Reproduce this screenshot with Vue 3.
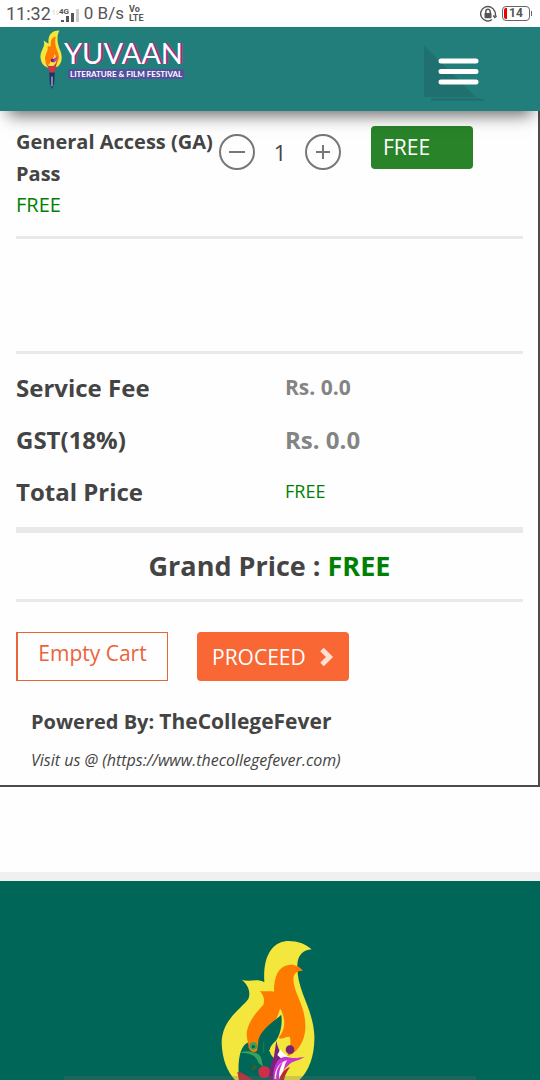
<script setup>
import { ref } from 'vue'

const quantity = ref(1)
const charges = [
  { label: 'Service Fee', value: 'Rs. 0.0', kind: 'small' },
  { label: 'GST(18%)', value: 'Rs. 0.0', kind: 'large' },
  { label: 'Total Price', value: 'FREE', kind: 'free' },
]
</script>

<template>
  <div class="screen">
    <div class="status">
      <span class="clock">11:32</span>
      <svg class="signal" viewBox="0 0 28 18" aria-hidden="true">
        <path d="M2 5v5M0 7l2-2M5 5v5M5 10l2-2" stroke="#ddd" fill="none" />
        <g fill="#555">
          <rect x="9" y="15" width="3" height="2" />
          <rect x="14" y="11" width="3" height="6" />
          <rect x="19" y="8" width="3" height="9" />
        </g>
        <rect x="24" y="4" width="3" height="13" fill="#ccc" />
        <text x="7" y="9" class="gen">4G</text>
      </svg>
      <span class="rate">0 B/s</span>
      <span class="volte"><span>Vo</span><span>LTE</span></span>
      <svg class="lock" viewBox="0 0 18 18" aria-hidden="true">
        <path d="M15.7 6.5A7.2 7.2 0 1 0 13 14.600M15.4 5.500a7.2 7.2 0 0 1 .8 5.500M14.300 10.500l1.500 2 1.900-1.700" fill="none" stroke="#555" stroke-width="1.4" />
        <rect x="5.5" y="8" width="7" height="5.2" rx="0.6" fill="#555" />
        <path d="M6.8 8V6.5a2.2 2.2 0 0 1 4.4 0V8" fill="none" stroke="#555" stroke-width="1.5" />
      </svg>
      <span class="battery">14</span>
    </div>

    <header class="header">
      <a class="brand" href="#" aria-label="Yuvaan Literature and Film Festival">
        <svg class="torch" viewBox="0 0 75 195" aria-hidden="true">
          <path d="M63 5C36 5 26 20 28 47L12 37C20 56 3 66 2 88C3 107 11 119 25 123L57 121C72 108 73 89 66 70C57 50 52 23 63 5Z" fill="#f3e63c" />
          <path d="M51 24C32 29 36 45 35 56L25 55C29 72 15 80 17 98C19 110 28 115 31 113C33 98 46 96 47 79C56 90 48 101 53 109C67 94 60 78 53 62C49 51 48 35 51 24Z" fill="#ff7a00" />
          <circle cx="41" cy="100" r="6" fill="#782377" />
          <path d="M45 94l14-7-7 15-8 7z" fill="#c238c9" />
          <path d="M16 104l13 14 15 0 12-15-6 24-5 14H32l-3-15z" fill="#d73243" />
          <path d="M30 139h18l-2 36-7 17-7-17z" fill="#203263" />
          <path d="M39 152v31" stroke="#e9e6f3" stroke-width="3" />
        </svg>
        <span class="wordmark">
          <span class="name">YUVAAN</span>
          <span class="tagline">LITERATURE &amp; FILM FESTIVAL</span>
        </span>
      </a>
      <button class="menu" type="button" aria-label="Open menu">
        <svg viewBox="0 0 64 60" aria-hidden="true">
          <path d="M0 3 52 54H0z" fill="#20706f" />
          <path d="M7 55h49l6 3H7z" fill="#20706f" />
          <path d="M17 18h35M17 28.500h35M17 39h35" stroke="#fff" stroke-width="5" stroke-linecap="round" />
        </svg>
      </button>
    </header>

    <main class="cart">
      <section class="item">
        <div class="pass">
          <h2>General Access (GA) Pass</h2>
          <p>FREE</p>
        </div>
        <div class="stepper">
          <button type="button" aria-label="Remove one pass" @click="quantity = Math.max(0, quantity - 1)">
            <svg viewBox="0 0 36 36"><circle cx="18" cy="18" r="17" /><path d="M10 18h16" /></svg>
          </button>
          <output>{{ quantity }}</output>
          <button type="button" aria-label="Add one pass" @click="quantity++">
            <svg viewBox="0 0 36 36"><circle cx="18" cy="18" r="17" /><path d="M11 18h14M18 11v14" /></svg>
          </button>
        </div>
        <button class="price" type="button">FREE</button>
      </section>

      <div class="notes"></div>

      <dl class="charges">
        <div v-for="row in charges" :key="row.label">
          <dt>{{ row.label }}</dt>
          <dd :class="row.kind">{{ row.value }}</dd>
        </div>
      </dl>

      <p class="grand">Grand Price : <strong>FREE</strong></p>

      <div class="actions">
        <button class="empty" type="button">Empty Cart</button>
        <button class="proceed" type="button">
          PROCEED
          <svg viewBox="0 0 14 20" aria-hidden="true"><path d="M2 2.500 9.500 10 2 17.500" /></svg>
        </button>
      </div>

      <div class="credit">
        <h3>Powered By: <span>TheCollegeFever</span></h3>
        <a href="https://www.thecollegefever.com">Visit us @ (https://www.thecollegefever.com)</a>
      </div>
    </main>

    <footer class="footer">
      <svg class="flame" viewBox="0 0 420 450" aria-hidden="true">
        <path d="M335 58C315 40 290 32 260 33C215 38 188 80 193 157C175 145 150 156 126 150C145 165 153 188 145 207C120 240 65 270 65 340C67 390 82 425 105 450H298C330 420 345 370 343 315C338 230 290 185 292 105C293 75 310 60 335 58Z" fill="#f3e63c" />
        <path d="M308 123C300 108 280 102 265 105C235 110 222 140 222 185C210 182 195 185 180 183C190 195 195 207 190 225C170 245 140 280 140 315C142 335 146 350 160 362C175 320 225 300 240 235C260 270 255 300 236 323C250 332 260 316 270 322C274 340 268 360 262 378C292 370 318 330 316 285C314 220 280 190 280 145C282 130 290 122 308 123Z" fill="#ff7a00" />
        <path d="M244 254C212 282 177 303 174 338L142 338C120 350 112 390 117 450H225L219 382C205 365 205 352 227 333C240 316 248 286 244 254Z" fill="#006758" />
        <path d="M206 362C218 356 221 346 228 340L237 360 222 371Z" fill="#f3e63c" />
        <path d="M190 335C193 345 189 356 191 368" fill="none" stroke="#24734b" stroke-width="4" />
        <path d="M144 334C160 338 168 330 175 338L171 362C165 369 152 366 146 354Z" fill="#ff7a00" />
        <circle cx="160" cy="348" r="11" fill="#35a35a" />
        <circle cx="160" cy="350" r="5" fill="#006758" />
        <path d="M124 366C148 360 163 366 177 374C187 383 184 394 190 410L176 400C167 373 148 370 124 369Z" fill="#35a35a" />
        <path d="M160 402l12 10-18 12z" fill="#35632e" />
        <circle cx="193" cy="426" r="18" fill="#d12d48" />
        <path d="M112 426C130 427 142 439 158 450H117Z" fill="#bd303c" />
        <path d="M229 332C234 355 240 370 256 380C232 390 218 415 221 450L208 450C207 413 216 391 222 379Z" fill="#782377" />
        <path d="M241 358C249 370 257 376 268 380L243 385 232 375Z" fill="#fff" />
        <circle cx="270" cy="359" r="13" fill="#782377" />
        <path d="M220 450C218 405 233 379 260 380C281 388 300 382 314 380C294 394 276 392 266 405C252 416 243 431 238 450Z" fill="#c933d1" />
        <path d="M223 446C226 413 239 396 262 391C251 405 258 411 239 447Z" fill="#fff" />
        <path d="M229 448C227 424 236 405 249 396C239 414 236 430 237 448Z" fill="#c933d1" />
        <path d="M270 411C253 417 243 431 237 450H252C255 433 263 422 270 411Z" fill="#b32c30" />
      </svg>
      <div class="panel"></div>
    </footer>
  </div>
</template>

<style>
body {
  margin: 0;
}
</style>

<style scoped>
.screen {
  display: flex;
  flex-direction: column;
  height: 100vh;
  overflow: hidden;
  background: #fefefe;
  color: #444;
  font-family: "Open Sans", "Noto Sans", sans-serif;
}
h2, h3, p, dl, dd {
  margin: 0;
}
button {
  margin: 0;
  padding: 0;
  border: 0;
  background: none;
  color: inherit;
  font: inherit;
  cursor: pointer;
}
svg {
  display: block;
}

.status {
  display: flex;
  flex: none;
  align-items: center;
  height: 27px;
  padding: 0 10px 0 6px;
  background: #fff;
  color: #555;
  font: 18px/27px Roboto, sans-serif;
}
.signal {
  width: 28px;
  height: 18px;
  margin: 0 4px 0 1px;
}
.gen {
  fill: #555;
  font: bold 8px Roboto, sans-serif;
}
.rate {
  font-size: 17px;
}
.volte {
  display: flex;
  flex-direction: column;
  margin: 0 auto 0 5px;
  font-size: 9px;
  font-weight: 700;
  line-height: 9px;
}
.lock {
  width: 18px;
  height: 18px;
  margin-right: 5px;
}
.battery {
  position: relative;
  box-sizing: border-box;
  width: 28px;
  height: 15px;
  border: 1px solid #666;
  border-radius: 4px;
  background: linear-gradient(90deg, #e00 4px, transparent 4px);
  background-clip: content-box;
  padding: 1px;
  font-size: 12px;
  font-weight: 700;
  line-height: 11px;
  text-align: center;
}
.battery::after {
  content: "";
  position: absolute;
  top: 4px;
  right: -3px;
  width: 1px;
  height: 5px;
  background: #666;
}

.header {
  position: relative;
  z-index: 1;
  display: flex;
  flex: none;
  justify-content: space-between;
  align-items: flex-start;
  box-sizing: border-box;
  height: 84px;
  padding: 2px 52px 0 39px;
  background: #217e7b;
  box-shadow: 0 12px 16px -8px rgba(0, 0, 0, 0.6);
}
.brand {
  display: flex;
  text-decoration: none;
}
.torch {
  width: 25px;
  height: 61px;
}
.wordmark {
  display: flex;
  flex-direction: column;
  align-items: flex-start;
  padding-top: 8px;
}
.name {
  color: #fff;
  font: 29px/32px Lato, sans-serif;
  text-shadow: 1px 0 #a02a82, 2px 0 #a02a82;
}
.tagline {
  margin-left: 4px;
  padding: 0 2px;
  background: #5350a0;
  color: #fff;
  font: 700 8px/10px Lato, sans-serif;
  white-space: nowrap;
}
.menu {
  margin-top: 14px;
}
.menu svg {
  width: 64px;
  height: 60px;
}

.cart {
  flex: none;
  padding: 15px 15px 13px 16px;
  border-right: 2px solid #4c4c4c;
  border-bottom: 2px solid #4c4c4c;
}
.item {
  display: grid;
  grid-template-columns: 203px 122px 1fr;
  align-items: start;
  height: 110px;
  border-bottom: 3px solid #e9e9e9;
}
.pass h2 {
  font-size: 20px;
  font-weight: 700;
  line-height: 32px;
}
.pass p {
  color: #008000;
  font-size: 20px;
  line-height: 30px;
}
.stepper {
  display: flex;
  justify-content: space-between;
  align-items: center;
  margin-top: 8px;
}
.stepper svg {
  width: 36px;
  height: 36px;
  fill: none;
  stroke: #777;
  stroke-width: 2;
}
.stepper output {
  font-size: 22px;
  line-height: 36px;
}
.price {
  height: 43px;
  margin-left: 30px;
  width: 102px;
  padding: 0 0 2px 12px;
  border-radius: 4px;
  background: #298329;
  color: #fff;
  font-size: 21px;
  text-align: left;
}
.notes {
  height: 112px;
  border-bottom: 3px solid #e9e9e9;
}
.charges {
  padding: 7px 0 10px;
  border-bottom: 6px solid #e9e9e9;
}
.charges div {
  display: grid;
  grid-template-columns: 269px 1fr;
  align-items: center;
  height: 52px;
}
.charges dt {
  font-size: 24px;
  font-weight: 700;
}
.charges dd {
  color: #848484;
  font-weight: 700;
}
.charges .small {
  font-size: 21px;
}
.charges .large {
  font-size: 24px;
}
.charges .free {
  color: #008000;
  font-size: 18px;
  font-weight: 400;
}
.grand {
  border-bottom: 3px solid #e9e9e9;
  font-size: 27px;
  font-weight: 700;
  line-height: 66px;
  text-align: center;
}
.grand strong {
  color: #008000;
  font-weight: 700;
}
.actions {
  display: flex;
  gap: 29px;
  padding-top: 30px;
}
.actions button {
  height: 49px;
  width: 152px;
  font-size: 21px;
}
.actions .empty {
  padding-bottom: 7px;
  border: 1px solid #e8653a;
  border-left-width: 2px;
  color: #e8653a;
}
.actions .proceed {
  display: flex;
  justify-content: space-between;
  align-items: center;
  padding: 0 15px;
  border-radius: 4px;
  background: #f86734;
  color: #fff;
}
.proceed svg {
  width: 14px;
  height: 20px;
  fill: none;
  stroke: #ffe0d2;
  stroke-width: 5;
}
.credit {
  padding: 24px 15px 0;
}
.credit h3 {
  font-size: 20px;
  font-weight: 700;
  line-height: 32px;
}
.credit h3 span {
  font-size: 21px;
}
.credit a {
  display: block;
  margin-top: 10px;
  color: inherit;
  font-size: 16px;
  font-style: italic;
  line-height: 24px;
  text-decoration: none;
}

.footer {
  position: relative;
  flex: 1;
  margin-top: 85px;
  padding-top: 49px;
  border-top: 9px solid #f0f0f0;
  background: #006758;
}
.flame {
  width: 140px;
  height: 150px;
  margin: 0 auto;
}
.panel {
  position: absolute;
  right: 64px;
  bottom: 0;
  left: 64px;
  height: 4px;
  background: rgba(110, 100, 105, 0.25);
}
</style>
